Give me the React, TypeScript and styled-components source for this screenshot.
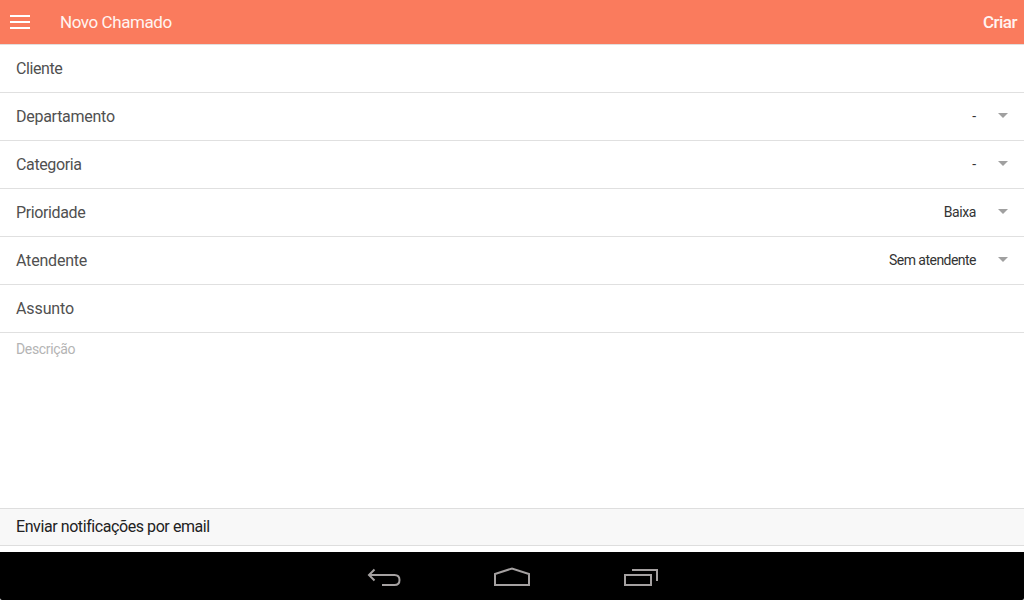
import styled, { createGlobalStyle } from "styled-components";

const fields = [
  { label: "Cliente", spacing: -0.42 },
  { label: "Departamento", value: "-", spacing: -0.27 },
  { label: "Categoria", value: "-", spacing: -0.37 },
  { label: "Prioridade", value: "Baixa", valueSpacing: -0.4, spacing: -0.38 },
  { label: "Atendente", value: "Sem atendente", valueSpacing: -0.53, spacing: -0.2 },
  { label: "Assunto", spacing: -0.1 },
];

const App = () => {
  return (
    <>
      <GlobalStyle />
      <Screen>
        <Header>
          <MenuButton aria-label="Menu">
            <span />
            <span />
            <span />
          </MenuButton>
          <Title>Novo Chamado</Title>
          <CreateButton>Criar</CreateButton>
        </Header>
        <Form>
          {fields.map((field) => (
            <Row key={field.label}>
              <Label $spacing={field.spacing}>{field.label}</Label>
              {field.value && (
                <Select>
                  <Value $spacing={field.valueSpacing ?? 0}>{field.value}</Value>
                  <Caret />
                </Select>
              )}
            </Row>
          ))}
          <Description>Descrição</Description>
          <Divider>
            <DividerText>Enviar notificações por email</DividerText>
          </Divider>
        </Form>
        <NavBar>
          <svg width="34" height="20" viewBox="367 567 34 20">
            <path d="M374.5 569.5L369 575L374.5 580.5M369 575H394.5C398 575 399.5 577 399.5 580C399.5 583 398 585 394.5 585H382" />
          </svg>
          <svg width="38" height="20" viewBox="493 567 38 20">
            <path d="M495 574L512 568.5L529 574V585H495Z" />
          </svg>
          <svg width="36" height="20" viewBox="623 567 36 20">
            <path d="M625 575H651V585H625ZM632 570H657V581" />
          </svg>
        </NavBar>
      </Screen>
    </>
  );
};

const GlobalStyle = createGlobalStyle`
  * {
    box-sizing: border-box;
  }

  body {
    margin: 0;
    font-family: Roboto, sans-serif;
    background: #000;
  }
`;

const Screen = styled.div`
  display: flex;
  flex-direction: column;
  width: 1024px;
  height: 600px;
  overflow: hidden;
  background: #fff;
`;

const Header = styled.header`
  display: flex;
  align-items: center;
  flex: none;
  height: 45px;
  padding: 0 7px 1px 10px;
  border-bottom: 1px solid #e2dedd;
  background: #fa7b5d;
  color: #fff4f1;
`;

const MenuButton = styled.button`
  display: flex;
  flex-direction: column;
  gap: 4px;
  width: 20px;
  margin-top: 1px;
  padding: 0;
  border: none;
  background: none;

  span {
    height: 2px;
    background: #fff;
  }
`;

const Title = styled.h1`
  flex: 1;
  margin: 0 0 0 30px;
  font-size: 17px;
  font-weight: 400;
  line-height: 20px;
  letter-spacing: -0.42px;
`;

const CreateButton = styled.button`
  padding: 0;
  border: none;
  background: none;
  color: #fff4f1;
  font: 500 17px/20px Roboto, sans-serif;
  letter-spacing: -0.5px;
`;

const Form = styled.main`
  display: flex;
  flex-direction: column;
  height: 507px;
`;

const Row = styled.div`
  display: flex;
  align-items: center;
  justify-content: space-between;
  flex: none;
  height: 48px;
  padding: 0 16px;
  border-bottom: 1px solid #e0e0e0;
`;

const Label = styled.label<{ $spacing: number }>`
  color: #505050;
  font-size: 16px;
  line-height: 20px;
  letter-spacing: ${({ $spacing }) => $spacing}px;
`;

const Select = styled.div`
  display: flex;
  align-items: center;
  gap: 22px;
  padding-bottom: 2px;
`;

const Value = styled.span<{ $spacing: number }>`
  color: #333;
  font-size: 14px;
  line-height: 18px;
  letter-spacing: ${({ $spacing }) => $spacing}px;
`;

const Caret = styled.i`
  margin-bottom: 1px;
  border-top: 5px solid #a0a0a0;
  border-right: 5px solid transparent;
  border-left: 5px solid transparent;
`;

const Description = styled.div`
  flex: 1;
  padding: 7px 16px;
  color: #b4b4b4;
  font-size: 14px;
  line-height: 18px;
  letter-spacing: -0.35px;
`;

const Divider = styled.div`
  flex: none;
  height: 38px;
  margin-bottom: 6px;
  padding: 8px 16px;
  border-top: 1px solid #dedede;
  border-bottom: 1px solid #dedede;
  background: #f8f8f8;
`;

const DividerText = styled.div`
  color: #222;
  font-size: 16px;
  line-height: 20px;
  letter-spacing: -0.42px;
`;

const NavBar = styled.nav`
  display: flex;
  justify-content: center;
  gap: 92px;
  flex: none;
  height: 48px;
  padding: 15px 0 0 2px;
  border-radius: 0 0 2px 2px;
  background: #000;

  path {
    fill: none;
    stroke: #a5a1a1;
    stroke-width: 2;
  }
`;

export default App;
